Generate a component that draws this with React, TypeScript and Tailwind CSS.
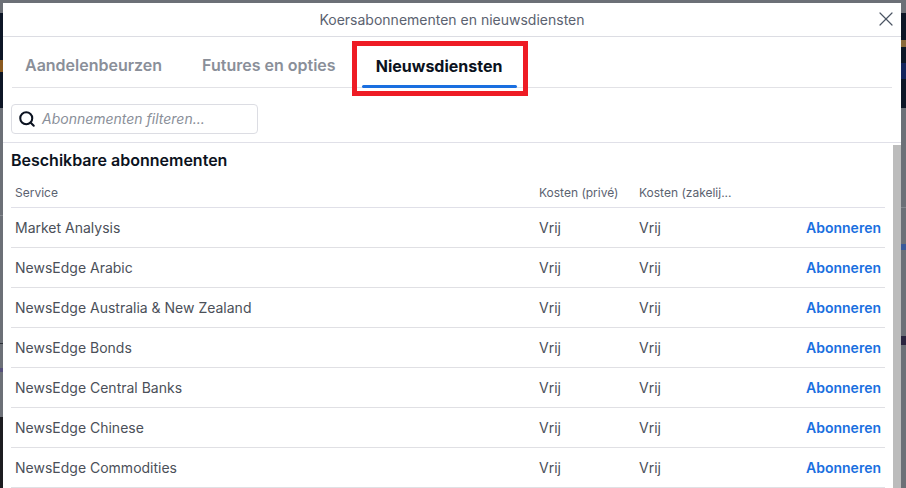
import { Search, X } from "lucide-react";

const SERVICES = [
  "Market Analysis",
  "NewsEdge Arabic",
  "NewsEdge Australia & New Zealand",
  "NewsEdge Bonds",
  "NewsEdge Central Banks",
  "NewsEdge Chinese",
  "NewsEdge Commodities",
];

function Row({ name }: { name: string }) {
  return (
    <div className="flex h-10 items-center border-b border-[#e0e0e4] pl-1 pr-1 text-[14px] text-[#4b5059]">
      <span className="w-[524px]">{name}</span>
      <span className="w-[100px]">Vrij</span>
      <span className="w-[100px]">Vrij</span>
      <a className="ml-auto font-semibold text-[#1a6fe0]">Abonneren</a>
    </div>
  );
}

export default function App() {
  return (
    <div className="flex h-[488px] w-[906px] overflow-hidden bg-[#6c7077] pt-[3px] font-['Inter',sans-serif]">
      {/* Page behind the dialog, left edge */}
      <div className="flex w-[3px] shrink-0 flex-col">
        <div className="mt-[10px] flex h-[95px] flex-col bg-[#0d1626]">
          <div className="mt-[47px] h-3 bg-[#8a5a20]" />
        </div>
        <div className="mt-[107px] h-px bg-[#85898f]" />
        <div className="mt-[127px] h-px bg-[#2b2f36]" />
        <div className="mt-[24px] h-1 bg-[#55507a]" />
        <div className="mt-[45px] h-[71px] bg-[#1c1c20]" />
      </div>

      <div className="flex h-[485px] w-[898px] shrink-0 flex-col overflow-hidden bg-white">
        {/* Title */}
        <div className="relative flex h-[34px] shrink-0 items-center justify-center border-b border-[#dcdde3] text-[14px] text-[#5b6270]">
          Koersabonnementen en nieuwsdiensten
          <button className="absolute right-[3px] top-[4px] text-[#4b5563]">
            <X size={24} strokeWidth={1.2} />
          </button>
        </div>

        {/* Tabs */}
        <div className="mx-[9px] flex h-[51px] shrink-0 items-end border-b border-[#e2e2e6] pl-[13px]">
          <div className="flex h-[46px] items-center pt-[2px] text-[16px] font-semibold text-[#8a8f99]">Aandelenbeurzen</div>
          <div className="ml-[40px] flex h-[46px] items-center pt-[2px] text-[16px] font-semibold text-[#8a8f99]">Futures en opties</div>
          <div className="relative ml-[26px] flex h-[46px] w-[155px] translate-y-px items-center justify-center pt-[2px] text-[16px] font-bold text-[#0b1220]">
            Nieuwsdiensten
            <span className="absolute bottom-0 left-0 right-0 h-[3px] rounded-full bg-[#1a6fe0]" />
            {/* Red annotation round the active tab */}
            <span className="absolute -bottom-[8px] -left-[10px] -right-[11px] -top-[1px] border-[5px] border-[#ee1c25]" />
          </div>
        </div>

        {/* Filter */}
        <div className="h-[55px] shrink-0 border-b border-[#e0e0e8] pl-2 pt-4">
          <div className="flex h-[30px] w-[247px] items-center gap-[6px] rounded border border-[#dcdde3] pb-px pl-[6px] text-[14px] italic text-[#8a8f99]">
            <Search size={18} strokeWidth={2.75} className="text-[#0b1220]" />
            Abonnementen filteren...
          </div>
        </div>

        {/* List */}
        <div className="flex min-h-0 flex-1">
          <div className="min-w-0 flex-1 pl-2 pr-2">
            <h2 className="pt-[7px] text-[16px] font-semibold leading-[20px] text-[#0b1220]">Beschikbare abonnementen</h2>
            <div className="mt-[3px] flex h-[35px] items-center border-b border-[#e0e0e8] pl-1 pr-1 pt-[6px] text-[12px] text-[#5b6270]">
              <span className="w-[524px]">Service</span>
              <span className="w-[100px]">Kosten (privé)</span>
              <span className="w-[100px]">Kosten (zakelij...</span>
            </div>
            {SERVICES.map((s) => (
              <Row key={s} name={s} />
            ))}
          </div>
          <div className="mt-[2px] w-2 shrink-0 bg-[#bcbcbc]" />
        </div>
      </div>

      {/* Page behind the dialog, right edge */}
      <div className="flex w-[5px] shrink-0 flex-col">
        <div className="mt-[10px] flex h-[95px] flex-col bg-[#0d1626]">
          <div className="mt-[27px] h-[7px] bg-[#8a6a3a]" />
          <div className="mt-4 h-4 bg-[#14245c]" />
        </div>
        <div className="mt-[99px] h-px bg-[#85898f]" />
        <div className="mt-[36px] h-[6px] bg-[#3a5a9a]" />
        <div className="mt-[86px] h-[9px] bg-[#2b2540]" />
      </div>
    </div>
  );
}
